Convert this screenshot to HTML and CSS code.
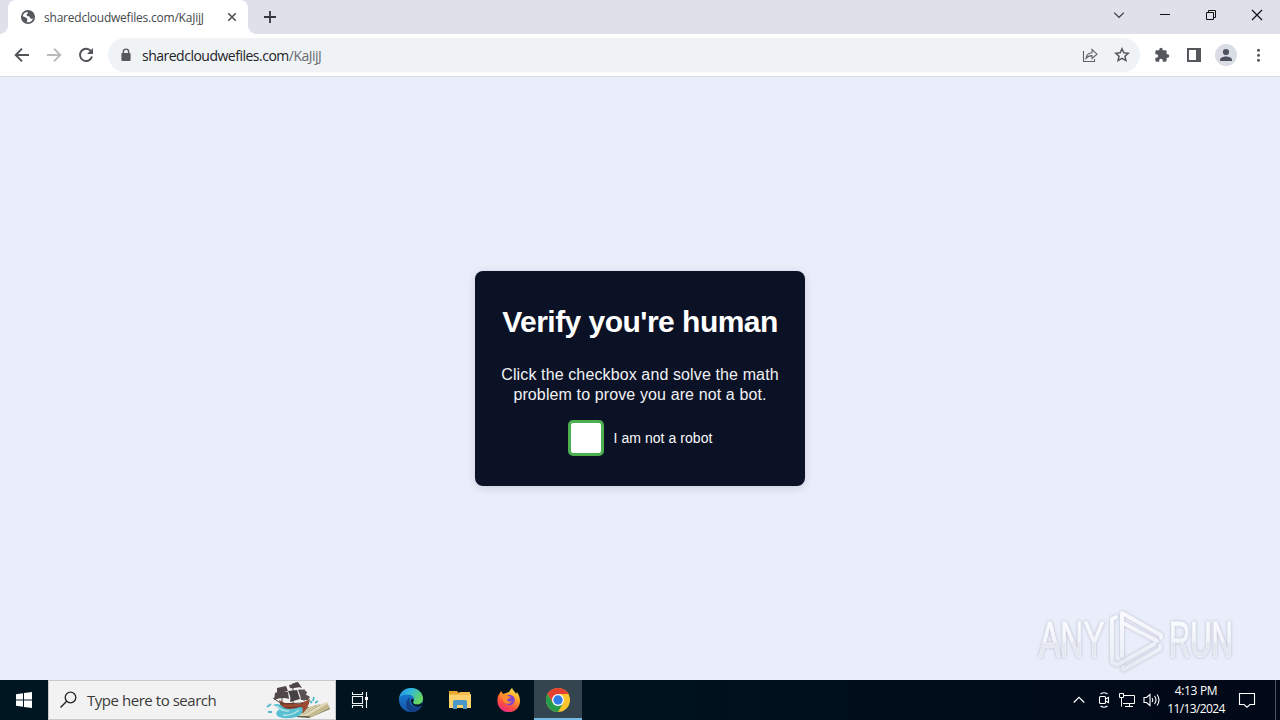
FILE: index.html
```html
<!DOCTYPE html>
<html lang="en">
<head>
<meta charset="utf-8">
<title>sharedcloudwefiles.com/KaJijJ</title>
<link rel="stylesheet" href="styles.css">
</head>
<body>
<div class="screen">
  <header class="tabstrip">
    <div class="tab">
      <svg class="globe" width="16" height="16" viewBox="0 0 16 16"><circle cx="8" cy="8" r="6.2" fill="#fff" stroke="#55595e" stroke-width="1.7"/><path d="M2 7l4 1.500 1.500 2-1 3.500C3.500 13 1.500 10 2 7zM7 2l4.500.500L14 7l-1.500 3-2-.500L9.500 7.500 7 7 6.500 5 8 4.500z" fill="#55595e"/></svg>
      <span class="tab-title">sharedcloudwefiles.com/KaJijJ</span>
      <svg class="tab-close" width="10" height="10" viewBox="0 0 10 10"><path d="M1.300 1.300l7.400 7.400M8.700 1.300L1.300 8.700" stroke="#4c5054" stroke-width="1.600"/></svg>
    </div>
    <svg class="new-tab" width="14" height="14" viewBox="0 0 14 14"><path d="M7 1v12M1 7h12" stroke="#34373c" stroke-width="1.800"/></svg>
    <div class="window-controls">
      <svg width="12" height="12" viewBox="0 0 12 12"><path d="M1.200 3.700L6 8.500l4.800-4.800" fill="none" stroke="#33363b" stroke-width="1.200"/></svg>
      <svg width="12" height="12" viewBox="0 0 12 12"><path d="M1 5.500h10" stroke="#111" stroke-width="1"/></svg>
      <svg width="12" height="12" viewBox="0 0 12 12"><path d="M1.500 3.500h7v7h-7zM3.500 3.500v-2h7v7h-2" fill="none" stroke="#111"/></svg>
      <svg width="12" height="12" viewBox="0 0 12 12"><path d="M1 1l10 10M11 1L1 11" stroke="#111" stroke-width="1.200"/></svg>
    </div>
  </header>
  <nav class="toolbar">
    <div class="nav-buttons">
      <svg width="16" height="16" viewBox="0 0 16 16"><path d="M15 8H2M8 1.700L1.700 8 8 14.300" fill="none" stroke="#505458" stroke-width="1.900"/></svg>
      <svg width="16" height="16" viewBox="0 0 16 16"><path d="M1 8h13M8 1.700L14.300 8 8 14.300" fill="none" stroke="#b9bbbe" stroke-width="1.900"/></svg>
      <svg width="16" height="16" viewBox="0 0 16 16"><path d="M13.200 4.500A6.100 6.100 0 1 0 14 9.500" fill="none" stroke="#505458" stroke-width="1.900"/><path d="M15 1v6H9z" fill="#505458"/></svg>
    </div>
    <div class="omnibox">
      <svg class="lock" width="10" height="14" viewBox="0 0 10 14"><path d="M2.400 6V3.700a2.600 2.600 0 0 1 5.200 0V6" fill="none" stroke="#55595e" stroke-width="1.400"/><rect x="0.400" y="5" width="9.200" height="8" rx="1" fill="#55595e"/></svg>
      <span class="url">sharedcloudwefiles.com<span class="url-path">/KaJijJ</span></span>
      <svg class="share" width="16" height="16" viewBox="0 0 16 16"><path d="M1.500 4v10.500h11v-2.500M4 11.500c.5-4 2.500-5.700 6-5.800V2.500l5 4.700-5 4.300V8.600c-2.700 0-4.300.7-6 2.900z" fill="none" stroke="#5f6368" stroke-width="1.100"/></svg>
      <svg class="star" width="16" height="16" viewBox="0 0 16 16"><path d="M8 1.800l1.850 4.050 4.350.45-3.250 2.950.95 4.350L8 11.350 4.100 13.600l.95-4.350L1.800 6.300l4.350-.45z" fill="none" stroke="#54585d" stroke-width="1.500"/></svg>
    </div>
    <div class="toolbar-actions">
      <svg width="16" height="16" viewBox="0 0 24 24"><path d="M20.500 11H19V7c0-1.100-.9-2-2-2h-4V3.500a2.500 2.500 0 0 0-5 0V5H4c-1.100 0-2 .9-2 2v3.800h1.500a2.700 2.700 0 0 1 0 5.400H2V20c0 1.100.9 2 2 2h3.800v-1.500a2.700 2.700 0 0 1 5.400 0V22H17c1.100 0 2-.9 2-2v-4h1.500a2.500 2.500 0 0 0 0-5z" fill="#54585d"/></svg>
      <svg width="16" height="16" viewBox="0 0 16 16"><path d="M1 1h14v14H1zM3 3v10h7V3z" fill="#54585d" fill-rule="evenodd"/></svg>
      <svg width="22" height="22" viewBox="0 0 22 22"><circle cx="11" cy="11" r="11" fill="#dadce6"/><circle cx="11" cy="8" r="3.100" fill="#4d5160"/><path d="M5 17v-1.500c0-2 4-3.100 6-3.100s6 1.100 6 3.100V17z" fill="#4d5160"/></svg>
      <svg width="16" height="16" viewBox="0 0 16 16"><g fill="#54585d"><circle cx="8.500" cy="3.300" r="1.500"/><circle cx="8.500" cy="8.300" r="1.500"/><circle cx="8.500" cy="13.300" r="1.500"/></g></svg>
    </div>
  </nav>
  <main class="page">
    <section class="card">
      <h1>Verify you're human</h1>
      <p>Click the checkbox and solve the math<br>problem to prove you are not a bot.</p>
      <div class="check-row"><span class="checkbox"></span><span class="check-label">I am not a robot</span></div>
    </section>
    <div class="watermark">
      <span class="wm-any">ANY</span>
      <svg width="56" height="64" viewBox="0 0 56 64"><defs><linearGradient id="wm" x1="0" y1="0" x2="0" y2="64" gradientUnits="userSpaceOnUse"><stop stop-color="#fafbff"/><stop offset=".55" stop-color="#f1f3fa"/><stop offset="1" stop-color="#e5e8f1"/></linearGradient></defs><g fill="none" stroke="url(#wm)" stroke-width="4" stroke-linejoin="round" stroke-linecap="round"><path d="M8 9l-4 2v43l5 3L46 36"/><path d="M14 48V5l39 22v3"/><path d="M15 15l34 18M15 59v3l37-21v-3"/></g></svg>
      <span class="wm-run">RUN</span>
    </div>
  </main>
  <footer class="taskbar">
    <div class="start"><svg width="16" height="16" viewBox="0 0 16 16"><path d="M0 2.300L7 1.300v6.200H0zM8 1.100L16 0v7.500H8zM0 8.500h7v6.200l-7-1zM8 8.500h8V16l-8-1.100z" fill="#fff"/></svg></div>
    <div class="search">
      <svg class="magnifier" width="18" height="18" viewBox="0 0 18 18"><circle cx="11.500" cy="6.500" r="5.300" fill="none" stroke="#222" stroke-width="1.300"/><path d="M7.700 10.300L1.500 16.500" stroke="#222" stroke-width="1.400"/></svg>
      <span class="search-text">Type here to search</span>
      <svg class="ship" width="66" height="38" viewBox="0 0 66 38">
        <path d="M31 36l8-9 23-5 3 6-21 9z" fill="#5f6049"/><path d="M31 35l15-10 7-1 9-3 2 2-19 12z" fill="#e2d9b8"/><path d="M42 35l20-12 3 4-18 9z" fill="#c4b88f"/><path d="M34 34l18-10M38 34l17-10" stroke="#a49c79" stroke-width=".7"/>
        <path d="M14 19l6 3 14 1 11-5c-1 6-3 10-7 14l-15-1c-5-3-8-6-9-12z" fill="#9b4a31"/><path d="M15 23l23-1M17 27l20-1" stroke="#5c332b" stroke-width="1.200"/>
        <path d="M8 24c4-2 7-1 10 2 6 4 12 1 18 0 3 1 2 6-1 8-5 4-16 4-21 2-4-2-3-6 0-7-1-3-3-4-6-5z" fill="#58bed2"/><path d="M12 25c3 4 7 5 12 5M18 34c6 1 11-1 16-5" fill="none" stroke="#b4e3e5" stroke-width="1.500"/>
        <path d="M17 6v18M28 2v22M39 8v12M8 17l9 6" stroke="#594841"/>
        <path d="M12 7l9-2 2 5-11 1zM10 12c4-2 9-2 13-1l1 7c-5-2-10-1-15 1z" fill="#51474a"/><path d="M23 10l9-1 3 9-10 3c1-4 0-7-2-11z" fill="#463f43"/><path d="M33 9c4-1 7 0 9 2l-1 3-6 0zM35 14c4-1 8 0 10 2l-2 3-7 0z" fill="#595052"/><path d="M24 4c4 0 5-3 9-3l4 6c-4-2-7 1-12 0z" fill="#4d4649"/>
        <path d="M2 26l4-3M3 31l4 0M45 20l2 2M49 16l-1 4M53 20l-3 2" stroke="#51b8ce" stroke-width="1.800"/>
      </svg>
    </div>
    <div class="apps">
      <div class="app"><svg width="18" height="18" viewBox="0 0 18 18"><g fill="none" stroke="#eef2f4" stroke-width="1.100"><path d="M1.500 1v2.500h10V1M1.500 17v-2.500h10V17M1.500 5.500h10v7h-10zM15.500 1v16"/></g><path d="M14 6h3v3h-3z" fill="#fff"/></svg></div>
      <div class="app edge"><svg width="26" height="26" viewBox="0 0 26 26"><defs><linearGradient id="eg" x1="0" y1="0" x2="1" y2=".5"><stop offset="0" stop-color="#258bdd"/><stop offset=".45" stop-color="#30b9dc"/><stop offset="1" stop-color="#66d65b"/></linearGradient><linearGradient id="eb" x2="0" y2="1"><stop stop-color="#1784dc"/><stop offset="1" stop-color="#1653a5"/></linearGradient></defs><circle cx="13" cy="13" r="12" fill="url(#eb)"/><path d="M1.200 11C2 5 7 1 13 1c7 0 12 5 12 10.500 0 4-3 6-6 6-4 0-4.500-2-3.500-3.500 1.200-2 .5-5-3-6-5-1.300-10 0-11.300 3z" fill="url(#eg)"/><path d="M12 10c-2 6 2 11 8 10 1.500 0 3-.6 4-1.300C22 23 18 25 14 25 7 24 6 14 12 10z" fill="#133f86"/><path d="M15.500 14c-1 1.500-.5 3.500 3.500 3.500 2 0 4-.6 5.600-2.500-.2 1.500-.6 2.500-1 3.500-5 3-10 0-10.600-4.500-.2-1.700 1.500-2.700 2-2 .9.700 1 1.200.5 2z" fill="#06151f"/></svg></div>
      <div class="app"><svg width="24" height="22" viewBox="0 0 24 22"><path d="M1 2h8l2 2h11v15H1z" fill="#e8a62f"/><path d="M1 5h22v14H1z" fill="#fbd26e"/><path d="M1 5h9l2-2h10v3H1z" fill="#f2bd4d"/><path d="M5 13q0-2 2-2h10q2 0 2 2v7h-4v-4H9v4H5z" fill="#4b96c8"/></svg></div>
      <div class="app"><svg width="24" height="24" viewBox="0 0 24 24"><defs><linearGradient id="ff" x1=".8" y1="0" x2=".3" y2="1"><stop stop-color="#fff04c"/><stop offset=".4" stop-color="#ff9b27"/><stop offset=".72" stop-color="#ff4c45"/><stop offset="1" stop-color="#e52983"/></linearGradient></defs><path d="M3 5l1-2 2 3 3-1 3-1c1-2 2-3 3-4 1 3 3 3 4 6l1-2c2 3 3 6 3 9a11.300 11.300 0 0 1-22.600 0C.4 9 1.300 7 3 5z" fill="url(#ff)"/><circle cx="12.500" cy="12" r="5.300" fill="#8242cc"/><path d="M4 8c4-2 5-1 7 0l3 1c-1 2-3 1-4 3 1 2 3 2 5 1-1 3-6 4-8 1-1-2-1-4-3-6z" fill="#ff8c2d"/></svg></div>
      <div class="app active"><svg width="24" height="24" viewBox="0 0 24 24"><circle cx="12" cy="12" r="12" fill="#fbc52d"/><path d="M1.600 6A12 12 0 0 1 22.400 6H12L6.800 15z" fill="#e44132"/><path d="M1.600 6A12 12 0 0 0 12 24l5.200-9H6.800z" fill="#279b4b"/><circle cx="12" cy="12" r="6" fill="#fff"/><circle cx="12" cy="12" r="4.700" fill="#317de8"/></svg></div>
    </div>
    <div class="tray">
      <svg class="chevron" width="12" height="12" viewBox="0 0 12 12"><path d="M.7 8.500L6 3.300l5.300 5.200" fill="none" stroke="#fff" stroke-width="1.200"/></svg>
      <svg class="camera" width="12" height="16" viewBox="0 0 12 16"><g fill="none" stroke="#fff" stroke-width="1.100"><rect x="1.500" y="4.500" width="6" height="7" rx="1"/><path d="M7.500 7l3-1.500v5l-3-1.500M2.500 2Q6-.5 9.500 2M2.500 14Q6 16.500 9.500 14"/></g></svg>
      <svg class="network" width="16" height="16" viewBox="0 0 16 16"><g fill="none" stroke="#fff"><path d="M5 3.500h10.500v8H4M10.500 11.500v3M6 14.500h8M.5 1.500h4v4h-4zM2.500 5.500v9"/></g></svg>
      <svg class="volume" width="18" height="16" viewBox="0 0 18 16"><g fill="none" stroke="#fff" stroke-width="1.100"><path d="M1 5.500h2.500l3.500-3v11l-3.500-3H1zM9 6q1.500 2 0 4M11.500 4q3 4 0 8M14 2.500q4 5.500 0 11"/></g></svg>
      <div class="clock"><span class="time">4:13 PM</span><span class="date">11/13/2024</span></div>
      <svg class="notice" width="18" height="18" viewBox="0 0 18 18"><path d="M1.500 2.500h15v11H12L9 16.200l-3-2.700H1.500z" fill="none" stroke="#fff" stroke-width="1.100"/></svg>
      <span class="show-desktop"></span>
    </div>
  </footer>
</div>
</body>
</html>
```
FILE: styles.css
```css
* { box-sizing: border-box; }
body { margin: 0; font-family: "Open Sans", "Noto Sans", sans-serif; }
svg { display: block; flex: none; }
.screen { width: 1280px; height: 720px; display: flex; flex-direction: column; overflow: hidden; background: #eaeefb; }
.tabstrip { height: 34px; background: #dee1e9; display: flex; flex: none; align-items: center; padding-left: 8px; }
.tab { width: 240px; height: 34px; background: #fff; border-radius: 8px 8px 0 0; display: flex; align-items: center; padding: 0 11px 0 12px; position: relative; }
.tab::before, .tab::after { content: ""; position: absolute; bottom: 0; width: 8px; height: 8px; }
.tab::before { left: -8px; background: radial-gradient(circle at 0 0, transparent 7.5px, #fff 8px); }
.tab::after { right: -8px; background: radial-gradient(circle at 100% 0, transparent 7.5px, #fff 8px); }
.tab-title { margin-left: 8px; width: 164px; font-size: 12px; letter-spacing: -0.22px; color: #45484c; white-space: nowrap; }
.tab-close { margin-left: auto; }
.new-tab { margin-left: 15px; }
.window-controls { margin-left: auto; display: flex; gap: 34px; padding: 0 17px 5px 0; }
.toolbar { height: 43px; flex: none; display: flex; align-items: center; background: #fff; border-bottom: 1px solid #d8dce7; }
.nav-buttons { display: flex; gap: 16px; padding-left: 14px; width: 108px; }
.omnibox { width: 1032px; height: 34px; border-radius: 17px; background: #f0f3f6; display: flex; align-items: center; padding: 0 10px 0 13px; }
.url { margin-left: 11px; font-size: 14px; letter-spacing: -0.5px; color: #202328; white-space: nowrap; }
.url-path { color: #676b70; }
.share { margin-left: auto; }
.star { margin-left: 16px; }
.toolbar-actions { display: flex; align-items: center; padding-left: 14px; gap: 16px; }
.toolbar-actions svg:nth-child(3) { margin: 0 -3px; }
.page { flex: 1; min-height: 0; display: flex; justify-content: center; align-items: center; position: relative; font-family: "Liberation Sans", Arial, sans-serif; }
.card { width: 330px; height: 215px; border-radius: 8px; background: #0c1225; color: #fff; padding: 32px 20px 30px; text-align: center; box-shadow: 0 2px 8px rgba(15,20,40,.14); }
h1 { margin: 0; font-size: 30px; line-height: 38px; letter-spacing: -.52px; white-space: nowrap; }
.card p { margin: 24px 0 15px; font-size: 16px; line-height: 20px; letter-spacing: .12px; color: #f0f1f5; white-space: nowrap; }
.check-row { display: flex; align-items: center; justify-content: center; gap: 10px; }
.checkbox { width: 36px; height: 36px; border: 3px solid #4caf50; border-radius: 5px; background: #fff; }
.check-label { font-size: 14px; letter-spacing: .05px; color: #f8f9fb; }
.watermark { position: absolute; right: 47px; bottom: 8px; display: flex; align-items: center; gap: 5px; font: bold 50px/64px "Liberation Sans Narrow", "Liberation Sans", sans-serif; filter: drop-shadow(0 0 1.5px #b4b9c8); }
.wm-any, .wm-run { display: block; width: 64px; height: 64px; font-weight: 400; transform-origin: left; white-space: nowrap; color: transparent; background: linear-gradient(#fbfcff 20%, #f3f5fb 52%, #e2e5ee 55%, #e5e8f1); -webkit-background-clip: text; background-clip: text; -webkit-text-stroke: 1px #f0f2f9; }
.wm-any { width: 102px; margin-right: -38px; transform: scaleX(.64); }
.wm-run { width: 110px; margin-right: -46px; transform: scaleX(.59); }
.taskbar { height: 40px; flex: none; display: flex; background: linear-gradient(90deg, #001721, #00111e 55%, #020817); color: #fff; }
.start { width: 48px; display: flex; align-items: center; justify-content: center; }
.search { width: 288px; background: #f2f2f2; border: 1px solid #c7c8cb; display: flex; align-items: center; padding-left: 10px; }
.search-text { margin-left: 10px; width: 170px; font-size: 15px; letter-spacing: -.46px; color: #3b3b3b; white-space: nowrap; }
.ship { margin-left: 8px; }
.apps { display: flex; gap: 1px; }
.app { width: 48px; display: flex; align-items: center; justify-content: center; }
.app.edge { margin-left: 2px; }
.app.active { background: #34454f; border-bottom: 2px solid #75b9e5; padding-top: 2px; }
.tray { margin-left: auto; display: flex; align-items: center; }
.camera { margin-left: 13px; }
.network { margin-left: 9px; }
.volume { margin-left: 8px; }
.clock { width: 70px; display: flex; flex-direction: column; align-items: center; font-size: 12px; line-height: 18px; white-space: nowrap; }
.time { letter-spacing: -.35px; }
.date { letter-spacing: -.6px; }
.notice { margin-left: 7px; }
.show-desktop { height: 40px; width: 5px; margin-left: 19px; border-left: 1px solid #4d5361; }
```
